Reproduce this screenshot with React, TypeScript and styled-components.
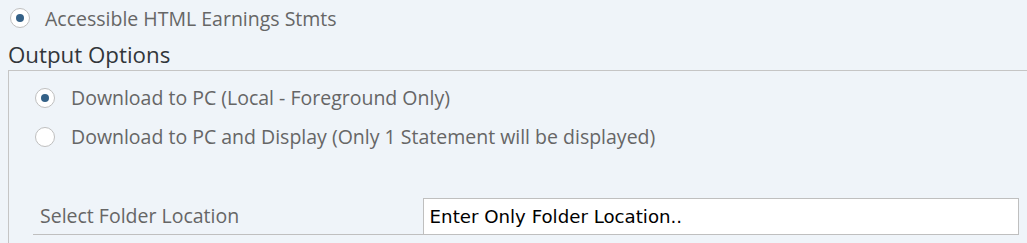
import React from "react";
import styled, { createGlobalStyle } from "styled-components";

const Global = createGlobalStyle`
  html, body { margin: 0; padding: 0; background: #eff4f9; }
  body { font-family: "Open Sans", "Liberation Sans", sans-serif; }
  * { box-sizing: border-box; }
`;

const Page = styled.div`
  width: 1027px;
  height: 243px;
  overflow: hidden;
  background: #eff4f9;
`;

const TopRow = styled.div`
  display: flex;
  align-items: center;
  height: 36px;
  padding-left: 10px;
  gap: 15px;
`;

const RadioCircle = styled.span<{ $checked?: boolean }>`
  width: 20px;
  height: 20px;
  border-radius: 50%;
  border: 1px solid #bfbfbf;
  background: #ffffff;
  display: inline-flex;
  align-items: center;
  justify-content: center;
  flex: none;
  &::after {
    content: "";
    width: 8px;
    height: 8px;
    border-radius: 50%;
    background: ${(p) => (p.$checked ? "#346187" : "transparent")};
  }
`;

const Label = styled.span`
  font-size: 19.5px;
  color: #666666;
  white-space: nowrap;
`;

const Legend = styled.div`
  font-size: 22.3px;
  color: #32363a;
  padding-left: 8px;
  padding-top: 4px;
  height: 34px;
  line-height: 30px;
`;

const Fieldset = styled.div`
  margin-left: 8px;
  border-top: 1px solid #c5c5c5;
  border-left: 1px solid #c5c5c5;
  padding: 7px 0 0 26px;
  height: 200px;
`;

const RadioRow = styled.div`
  display: flex;
  align-items: center;
  gap: 16px;
  height: 39px;
`;

const Spacer = styled.div`
  height: 43px;
`;

const FieldRow = styled.div`
  display: flex;
  align-items: flex-end;
  margin-left: -2px;
  border-bottom: 1px solid #bfbfbf;
  width: 986px;
  height: 36px;
`;

const FieldLabel = styled.span`
  font-size: 19.5px;
  color: #666666;
  width: 390px;
  padding-left: 7px;
  padding-bottom: 5px;
  white-space: nowrap;
`;

const Input = styled.div`
  width: 597px;
  height: 36px;
  background: #ffffff;
  border: 1px solid #bfbfbf;
  border-bottom: none;
  font-family: "DejaVu Sans", Tahoma, sans-serif;
  font-size: 18.2px;
  color: #000000;
  display: flex;
  align-items: center;
  padding-left: 6px;
`;

export default function App() {
  return (
    <Page>
      <Global />
      <TopRow>
        <RadioCircle $checked />
        <Label>Accessible HTML Earnings Stmts</Label>
      </TopRow>
      <Legend>Output Options</Legend>
      <Fieldset>
        <RadioRow>
          <RadioCircle $checked />
          <Label>Download to PC (Local - Foreground Only)</Label>
        </RadioRow>
        <RadioRow>
          <RadioCircle />
          <Label>Download to PC and Display (Only 1 Statement will be displayed)</Label>
        </RadioRow>
        <Spacer />
        <FieldRow>
          <FieldLabel>Select Folder Location</FieldLabel>
          <Input>Enter Only Folder Location..</Input>
        </FieldRow>
      </Fieldset>
    </Page>
  );
}
